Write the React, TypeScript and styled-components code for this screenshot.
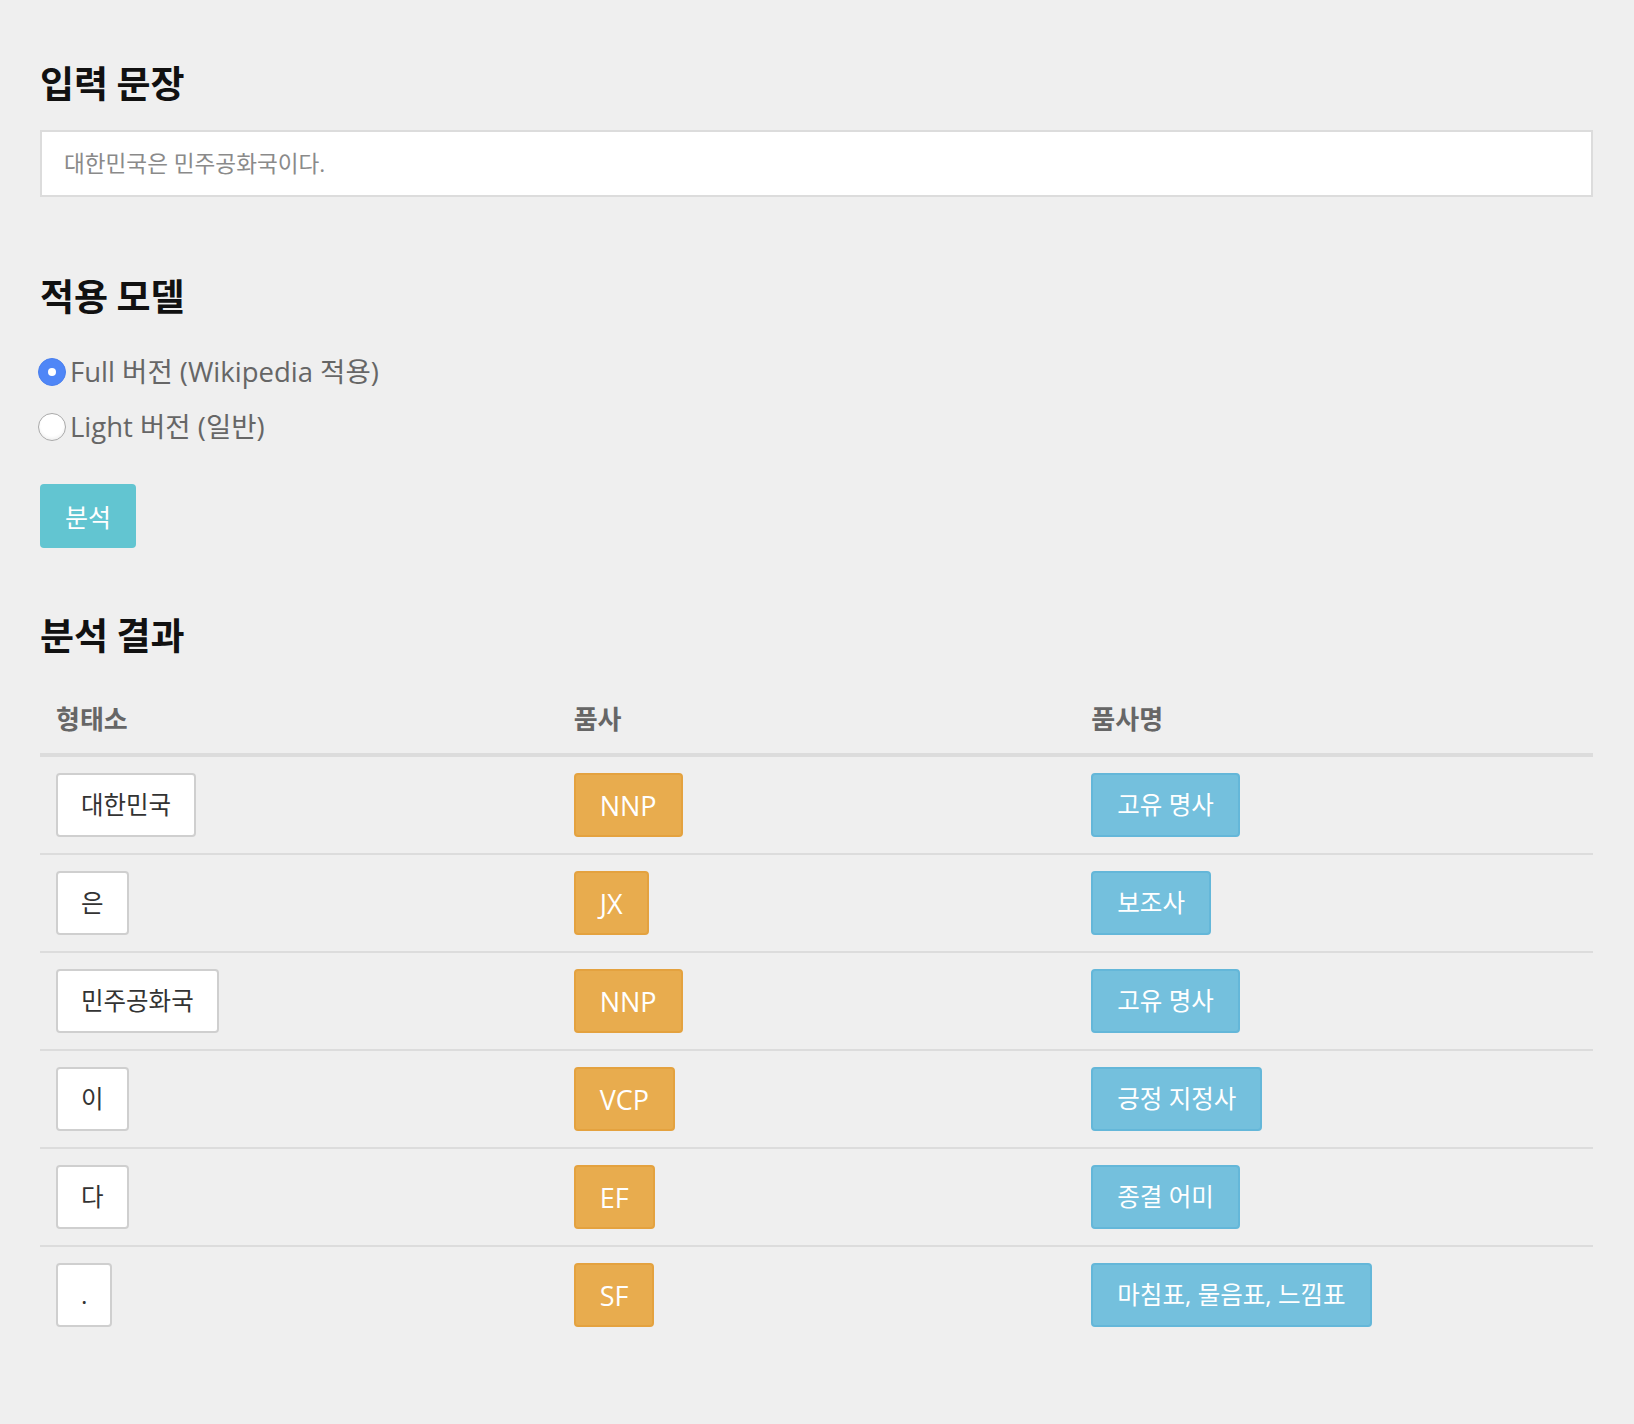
import React, { useState } from "react";
import styled, { createGlobalStyle } from "styled-components";

const GlobalStyle = createGlobalStyle`
  html, body {
    margin: 0;
    padding: 0;
    background: #efefef;
  }
  body {
    font-family: "Open Sans", "Noto Sans CJK KR", sans-serif;
    color: #333;
  }
  * {
    box-sizing: border-box;
  }
`;

const Page = styled.div`
  padding: 61px 41px 90px 40px;
`;

const Title = styled.h2<{ $top?: number }>`
  margin: ${({ $top }) => $top ?? 0}px 0 0;
  font-family: "Noto Sans CJK KR", "Open Sans", sans-serif;
  font-size: 37px;
  line-height: 42px;
  font-weight: 700;
  color: #111;
`;

const SentenceInput = styled.input`
  display: block;
  width: 100%;
  height: 67px;
  margin-top: 27px;
  padding: 0 22px;
  border: 2px solid #dcdcdc;
  border-radius: 0;
  background: #fff;
  font-family: "Open Sans", "Noto Sans CJK KR", sans-serif;
  font-size: 22.6px;
  color: #333;
  outline: none;

  &::placeholder {
    color: #8a8a8a;
  }
`;

const RadioGroup = styled.div`
  display: flex;
  flex-direction: column;
  margin-top: 28px;
`;

const RadioRow = styled.label`
  display: flex;
  align-items: center;
  height: 55px;
  cursor: pointer;
`;

const RadioMark = styled.span<{ $checked: boolean }>`
  position: relative;
  flex: none;
  width: 28px;
  height: 28px;
  margin: 0 4px 0 -2px;
  border-radius: 50%;
  background: ${({ $checked }) => ($checked ? "#4f86f7" : "#fff")};
  border: 1px solid ${({ $checked }) => ($checked ? "#4a80ee" : "#a9a9a9")};
  box-shadow: ${({ $checked }) =>
    $checked ? "none" : "inset 0 -2px 3px rgba(0, 0, 0, 0.06)"};

  &::after {
    content: "";
    display: ${({ $checked }) => ($checked ? "block" : "none")};
    position: absolute;
    left: 50%;
    top: 50%;
    width: 8px;
    height: 8px;
    margin: -4px 0 0 -4px;
    border-radius: 50%;
    background: #fff;
  }
`;

const RadioText = styled.span`
  font-size: 27.5px;
  line-height: 36px;
  color: #666;
`;

const AnalyzeButton = styled.button`
  display: inline-flex;
  align-items: center;
  justify-content: center;
  height: 64px;
  margin-top: 30px;
  padding: 0 25px;
  border: none;
  border-radius: 4px;
  background: #62c5d1;
  color: #fff;
  font-family: "Open Sans", "Noto Sans CJK KR", sans-serif;
  font-size: 25px;
  cursor: pointer;
`;

const ResultTable = styled.table`
  width: 100%;
  margin-top: 46px;
  border-collapse: separate;
  border-spacing: 0;
  table-layout: fixed;
`;

const HeadCell = styled.th`
  padding: 0 16px 18px;
  border-bottom: 4px solid #dcdcdc;
  text-align: left;
  font-family: "Noto Sans CJK KR", "Open Sans", sans-serif;
  font-size: 26px;
  line-height: 34px;
  font-weight: 700;
  color: #666;
`;

const BodyRow = styled.tr`
  & + & td {
    border-top: 2px solid #dcdcdc;
  }
`;

const BodyCell = styled.td`
  padding: 16px;
  vertical-align: middle;
`;

const Chip = styled.span<{ $tone: "plain" | "warning" | "info"; $latin?: boolean }>`
  display: inline-flex;
  align-items: center;
  height: 64px;
  padding: 0 ${({ $tone }) => ($tone === "plain" ? 23 : 24)}px;
  border-radius: 4px;
  border: 2px solid
    ${({ $tone }) =>
      $tone === "warning" ? "#e4a23f" : $tone === "info" ? "#64b7d9" : "#cfcfcf"};
  background: ${({ $tone }) =>
    $tone === "warning" ? "#e8ac4e" : $tone === "info" ? "#74c0dd" : "#fff"};
  color: ${({ $tone }) => ($tone === "plain" ? "#333" : "#fff")};
  font-size: ${({ $latin }) => ($latin ? 27 : 24.5)}px;
  line-height: 1;
  white-space: nowrap;
`;

const rows = [
  { morph: "대한민국", tag: "NNP", name: "고유 명사" },
  { morph: "은", tag: "JX", name: "보조사" },
  { morph: "민주공화국", tag: "NNP", name: "고유 명사" },
  { morph: "이", tag: "VCP", name: "긍정 지정사" },
  { morph: "다", tag: "EF", name: "종결 어미" },
  { morph: ".", tag: "SF", name: "마침표, 물음표, 느낌표" },
];

const models = [
  { id: "full", label: "Full 버전 (Wikipedia 적용)" },
  { id: "light", label: "Light 버전 (일반)" },
];

export default function App() {
  const [model, setModel] = useState("full");

  return (
    <Page>
      <GlobalStyle />
      <Title>입력 문장</Title>
      <SentenceInput type="text" placeholder="대한민국은 민주공화국이다." />

      <Title $top={77}>적용 모델</Title>
      <RadioGroup>
        {models.map((m) => (
          <RadioRow key={m.id} onClick={() => setModel(m.id)}>
            <RadioMark $checked={model === m.id} />
            <RadioText>{m.label}</RadioText>
          </RadioRow>
        ))}
      </RadioGroup>

      <AnalyzeButton type="button">분석</AnalyzeButton>

      <Title $top={65}>분석 결과</Title>
      <ResultTable>
        <thead>
          <tr>
            <HeadCell>형태소</HeadCell>
            <HeadCell>품사</HeadCell>
            <HeadCell>품사명</HeadCell>
          </tr>
        </thead>
        <tbody>
          {rows.map((r, i) => (
            <BodyRow key={i}>
              <BodyCell>
                <Chip $tone="plain">{r.morph}</Chip>
              </BodyCell>
              <BodyCell>
                <Chip $tone="warning" $latin>
                  {r.tag}
                </Chip>
              </BodyCell>
              <BodyCell>
                <Chip $tone="info">{r.name}</Chip>
              </BodyCell>
            </BodyRow>
          ))}
        </tbody>
      </ResultTable>
    </Page>
  );
}
